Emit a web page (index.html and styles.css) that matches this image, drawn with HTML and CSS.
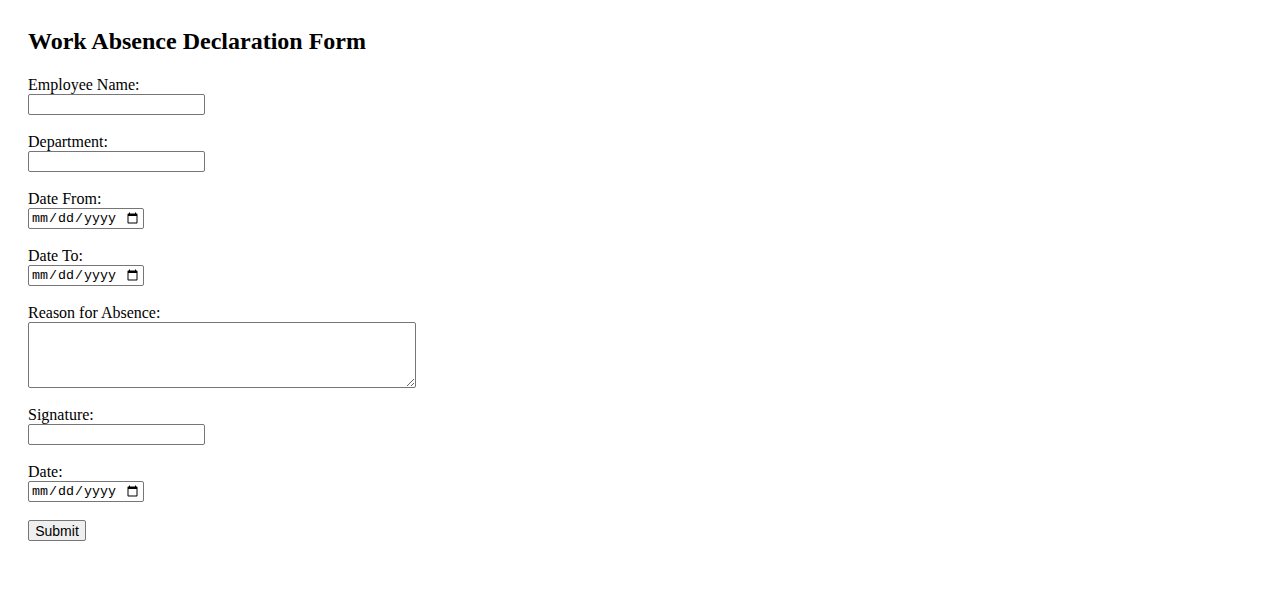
FILE: index.html
```html
<!DOCTYPE html>
<html lang="en">
<head>
<meta charset="utf-8">
<title>Work Absence Declaration Form</title>
<link rel="stylesheet" href="styles.css">
</head>
<body>
<div class="page">
  <h2 class="title">Work Absence Declaration Form</h2>
  <form class="form">
    <label class="label" for="name">Employee Name:</label><br>
    <input class="text-input" type="text" id="name"><br><br>

    <label class="label" for="dept">Department:</label><br>
    <input class="text-input" type="text" id="dept"><br><br>

    <label class="label" for="from">Date From:</label><br>
    <input class="date-input" type="date" id="from"><br><br>

    <label class="label" for="to">Date To:</label><br>
    <input class="date-input" type="date" id="to"><br><br>

    <label class="label" for="reason">Reason for Absence:</label><br>
    <textarea class="area" id="reason" rows="4" cols="50"></textarea><br><br>

    <label class="label" for="sig">Signature:</label><br>
    <input class="text-input" type="text" id="sig"><br><br>

    <label class="label" for="date">Date:</label><br>
    <input class="date-input" type="date" id="date"><br><br>

    <button class="submit" type="submit">Submit</button>
  </form>
</div>
</body>
</html>
```

FILE: styles.css
```css
html, body {
  margin: 0;
  padding: 0;
  background: #ffffff;
}

body {
  font-family: "Liberation Serif", "Times New Roman", serif;
  font-size: 16px;
  color: #000000;
}

.page {
  padding: 28px 28px;
}

.title {
  font-size: 24px;
  font-weight: bold;
  margin: 0 0 21px 0;
}

.form {
  margin: 0;
}

.text-input {
  box-sizing: border-box;
  width: 177px;
  height: 21px;
  margin: 0;
  padding: 1px 2px;
  border: 1px solid #767676;
  border-radius: 2px;
  font-family: "Liberation Sans", Arial, sans-serif;
  font-size: 13.33px;
  background: #ffffff;
}

.date-input {
  box-sizing: border-box;
  width: 116px;
  height: 21px;
  margin: 0;
  padding: 1px 2px;
  border: 1px solid #767676;
  border-radius: 2px;
  font-family: "Liberation Mono", monospace;
  font-size: 13.33px;
  background: #ffffff;
}

.area {
  box-sizing: border-box;
  width: 388px;
  height: 66px;
  margin: 0;
  padding: 2px;
  border: 1px solid #767676;
  border-radius: 2px;
  font-family: "Liberation Mono", monospace;
  font-size: 13.33px;
  vertical-align: bottom;
}

.submit {
  box-sizing: border-box;
  width: 58px;
  height: 21px;
  margin: 0;
  padding: 1px 6px;
  border: 1px solid #767676;
  border-radius: 2px;
  background: #efefef;
  font-family: "Liberation Sans", Arial, sans-serif;
  font-size: 14px;
  color: #000000;
}
```
